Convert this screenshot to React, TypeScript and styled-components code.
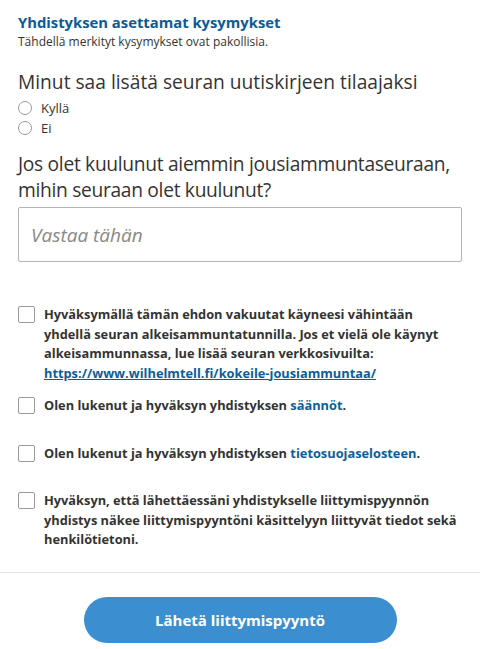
import React from "react";
import styled, { createGlobalStyle } from "styled-components";

const Global = createGlobalStyle`
  html, body { margin: 0; padding: 0; background: #fff; }
  body { font-family: "Open Sans", "Noto Sans", sans-serif; color: #333; }
  * { box-sizing: border-box; }
`;

const Page = styled.div`
  width: 480px;
  height: 649px;
  overflow: hidden;
  display: flex;
  flex-direction: column;
`;

const Content = styled.div`
  padding: 12px 18px 0 18px;
  display: flex;
  flex-direction: column;
`;

const Title = styled.h2`
  margin: 0;
  font-size: 14.8px;
  line-height: 20px;
  font-weight: 700;
  color: #0b5a9a;
`;

const Sub = styled.p`
  margin: 2px 0 0;
  font-size: 12px;
  line-height: 16px;
  color: #333;
`;

const Question = styled.h3<{ $top: number; $tight?: boolean }>`
  margin: ${(p) => p.$top}px 0 0;
  font-size: 19.2px;
  line-height: 26px;
  font-weight: 400;
  letter-spacing: ${(p) => (p.$tight ? "-0.3px" : "0")};
  color: #333;
`;

const RadioList = styled.div`
  display: flex;
  flex-direction: column;
  margin-top: 3px;
`;

const RadioRow = styled.label`
  display: flex;
  align-items: center;
  height: 20px;
  gap: 9px;
  font-size: 13px;
  color: #333;
`;

const RadioCircle = styled.span`
  width: 14px;
  height: 14px;
  border-radius: 50%;
  border: 1px solid #9a9a9a;
  background: #fff;
  flex: none;
`;

const Input = styled.div`
  margin-top: 4px;
  height: 55px;
  border: 1px solid #b4b4b4;
  border-radius: 2px;
  display: flex;
  align-items: center;
  padding-left: 12px;
  font-size: 19px;
  font-style: italic;
  color: #888;
`;

const Checks = styled.div`
  margin-top: 43px;
  display: flex;
  flex-direction: column;
`;

const CheckRow = styled.div<{ $gap: number }>`
  display: flex;
  align-items: flex-start;
  gap: 9px;
  margin-top: ${(p) => p.$gap}px;
`;

const Box = styled.span`
  flex: none;
  width: 17px;
  height: 17px;
  margin-top: 1px;
  border: 1px solid #9a9a9a;
  border-radius: 2px;
  background: #fff;
`;

const CheckText = styled.div`
  font-size: 12.8px;
  line-height: 19.5px;
  font-weight: 700;
  color: #333;
`;

const Link = styled.a<{ $underline?: boolean }>`
  color: #0d5d9c;
  text-decoration: ${(p) => (p.$underline ? "underline" : "none")};
`;

const Divider = styled.hr`
  margin: 22px 0 0;
  border: none;
  border-top: 1px solid #e4e4e4;
  width: 100%;
`;

const Footer = styled.div`
  display: flex;
  justify-content: center;
  padding-top: 24px;
`;

const Button = styled.button`
  width: 313px;
  height: 46px;
  border: none;
  border-radius: 23px;
  background: #3b8fd1;
  color: #fff;
  font-family: "Open Sans", "Noto Sans", sans-serif;
  font-size: 15px;
  font-weight: 700;
`;

export default function App() {
  return (
    <Page>
      <Global />
      <Content>
        <Title>Yhdistyksen asettamat kysymykset</Title>
        <Sub>Tähdellä merkityt kysymykset ovat pakollisia.</Sub>
        <Question $top={19}>Minut saa lisätä seuran uutiskirjeen tilaajaksi</Question>
        <RadioList>
          <RadioRow>
            <RadioCircle />
            Kyllä
          </RadioRow>
          <RadioRow>
            <RadioCircle />
            Ei
          </RadioRow>
        </RadioList>
        <Question $top={13} $tight>
          Jos olet kuulunut aiemmin jousiammuntaseuraan, mihin seuraan olet kuulunut?
        </Question>
        <Input>Vastaa tähän</Input>
        <Checks>
          <CheckRow $gap={0}>
            <Box />
            <CheckText>
              Hyväksymällä tämän ehdon vakuutat käyneesi vähintään yhdellä seuran
              alkeisammuntatunnilla. Jos et vielä ole käynyt alkeisammunnassa, lue
              lisää seuran verkkosivuilta:{" "}
              <Link $underline>https://www.wilhelmtell.fi/kokeile-jousiammuntaa/</Link>
            </CheckText>
          </CheckRow>
          <CheckRow $gap={13}>
            <Box />
            <CheckText>
              Olen lukenut ja hyväksyn yhdistyksen <Link>säännöt</Link>.
            </CheckText>
          </CheckRow>
          <CheckRow $gap={28}>
            <Box />
            <CheckText>
              Olen lukenut ja hyväksyn yhdistyksen <Link>tietosuojaselosteen</Link>.
            </CheckText>
          </CheckRow>
          <CheckRow $gap={28}>
            <Box />
            <CheckText>
              Hyväksyn, että lähettäessäni yhdistykselle liittymispyynnön yhdistys
              näkee liittymispyyntöni käsittelyyn liittyvät tiedot sekä
              henkilötietoni.
            </CheckText>
          </CheckRow>
        </Checks>
      </Content>
      <Divider />
      <Footer>
        <Button>Lähetä liittymispyyntö</Button>
      </Footer>
    </Page>
  );
}
